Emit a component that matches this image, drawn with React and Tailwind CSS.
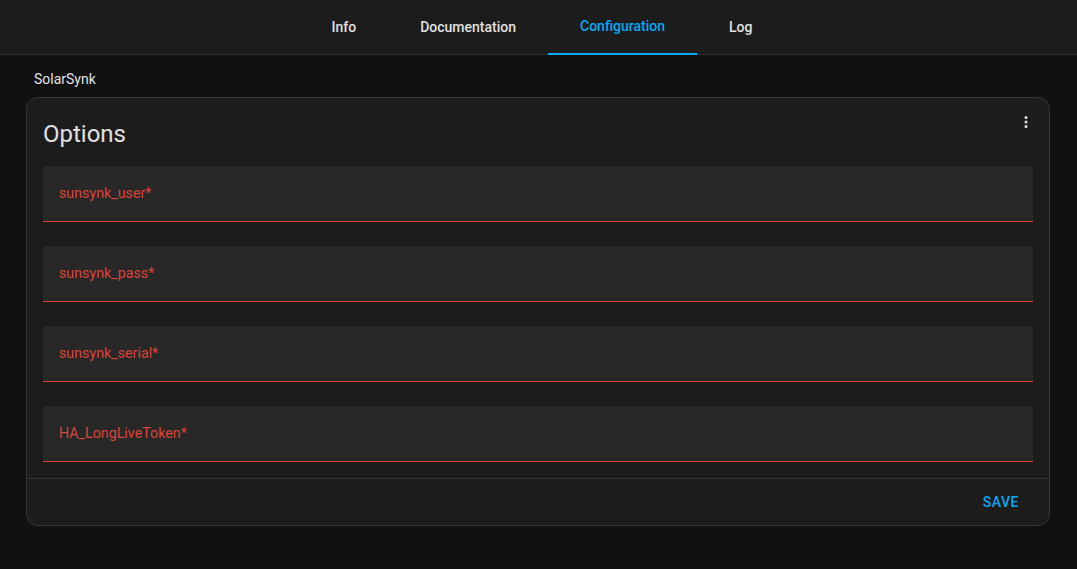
import React from "react";

const fields = ["sunsynk_user*", "sunsynk_pass*", "sunsynk_serial*", "HA_LongLiveToken*"];
const tabs = ["Info", "Documentation", "Configuration", "Log"];

export default function App() {
  return (
    <div
      className="min-h-[569px] w-full bg-[#111111] text-[#e1e1e1]"
      style={{ fontFamily: "Roboto, 'Liberation Sans', sans-serif" }}
    >
      <div className="flex h-[55px] justify-center border-b border-[#2c2c2c] bg-[#1c1c1c]">
        <div className="ml-[7px] flex h-full">
          {tabs.map((t) => {
            const active = t === "Configuration";
            return (
              <div
                key={t}
                className={
                  "relative flex h-full items-center px-8 text-[14px] font-medium " +
                  (active ? "text-[#03a9f4]" : "text-[#e1e1e1]")
                }
              >
                <span className={active ? "-translate-y-[1px]" : ""}>{t}</span>
                {active && (
                  <div className="absolute bottom-[-1px] left-0 right-0 h-[2px] bg-[#03a9f4]" />
                )}
              </div>
            );
          })}
        </div>
      </div>

      <div className="ml-[26px] w-[1024px] pt-[14px]">
        <div className="pl-2 text-[14px] leading-[20px] text-[#e1e1e1]">SolarSynk</div>

        <div className="mt-2 rounded-[12px] border border-[#353535] bg-[#1c1c1c]">
          <div className="flex items-start justify-between pl-4">
            <h1 className="pt-5 pb-4 text-[24px] leading-[32px] font-normal text-[#e1e1e1]">Options</h1>
            <div className="-mr-[1px] flex h-12 w-12 items-center justify-center text-[#e1e1e1]">
              <svg width="18" height="18" viewBox="0 0 24 24" fill="currentColor">
                <path d="M12,16A2,2 0 0,1 14,18A2,2 0 0,1 12,20A2,2 0 0,1 10,18A2,2 0 0,1 12,16M12,10A2,2 0 0,1 14,12A2,2 0 0,1 12,14A2,2 0 0,1 10,12A2,2 0 0,1 12,10M12,4A2,2 0 0,1 14,6A2,2 0 0,1 12,8A2,2 0 0,1 10,6A2,2 0 0,1 12,4Z" />
              </svg>
            </div>
          </div>

          <div className="flex flex-col gap-6 px-4 pb-4">
            {fields.map((f) => (
              <div
                key={f}
                className="box-border flex h-[56px] items-center rounded-t-[4px] border-b border-[#db4437] bg-[#282828] px-4"
              >
                <span className="text-[14.25px] text-[#db4437]">{f}</span>
              </div>
            ))}
          </div>

          <div className="flex h-[47px] items-center justify-end border-t border-[#353535] pr-[30px]">
            <span className="text-[14px] font-medium uppercase tracking-[0.5px] text-[#03a9f4]">Save</span>
          </div>
        </div>
      </div>
    </div>
  );
}
